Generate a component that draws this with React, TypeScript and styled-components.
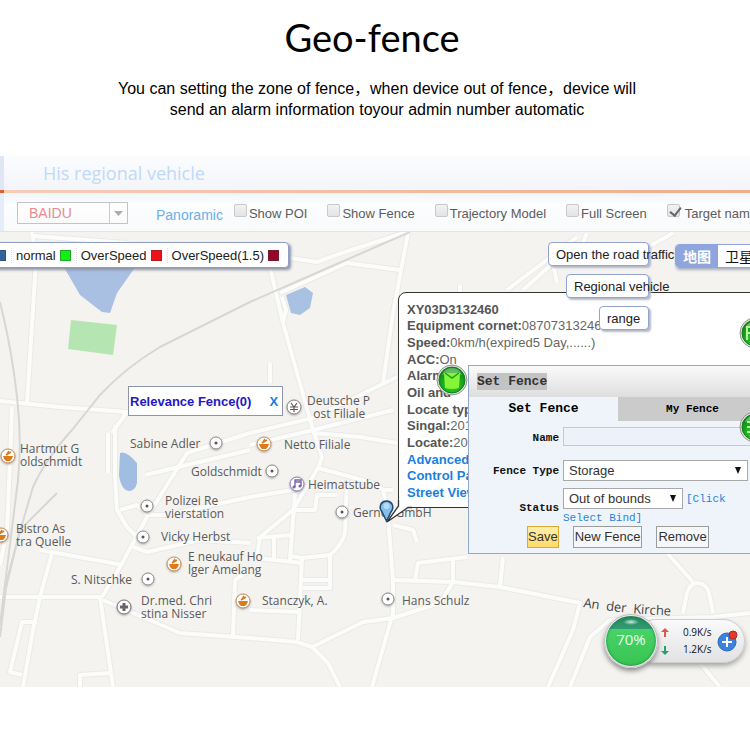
import React from "react";
import styled, { createGlobalStyle } from "styled-components";

const sans = '"Liberation Sans", Arial, sans-serif';
const mapFont = '"Open Sans", "Noto Sans", sans-serif';
const mono = '"Liberation Mono", monospace';

const GlobalStyle = createGlobalStyle`
  * { box-sizing: border-box; }
  body { margin: 0; background: #fff; font-family: ${sans}; font-size: 13px; color: #222; overflow-x: hidden; }
  button, input, select { font: inherit; color: inherit; margin: 0; }
  a { text-decoration: none; }
`;

const Page = styled.main`
  display: flex;
  flex-direction: column;
  padding-bottom: 47px;
`;

const Intro = styled.header`
  height: 156px;
  padding-top: 10px;
  text-align: center;
  color: #000;
`;

const Title = styled.h1`
  margin: 0;
  padding-right: 6px;
  font: 400 38px/54px Lato, sans-serif;
`;

const Lead = styled.p`
  margin: 14px 0 0;
  padding-left: 4px;
  font: 16px/21px "Liberation Sans", "Noto Sans CJK SC", sans-serif;
`;

const AppFrame = styled.section`
  overflow: hidden;
`;

const AppHeader = styled.div`
  display: flex;
  align-items: center;
  height: 34px;
  padding-left: 43px;
  background: linear-gradient(90deg, #dfe6f5 4px, transparent 4px),
    linear-gradient(180deg, #fbfcfe, #f3f5fa);
`;

const AppName = styled.h2`
  margin: 0;
  color: #bfdaf8;
  font: 400 18px/24px ${mapFont};
`;

const Rule = styled.div`
  height: 3px;
  background: linear-gradient(90deg, #dd5f2a 4px, #f6cdb9 4px, #efad8c);
`;

const Toolbar = styled.div`
  display: flex;
  align-items: center;
  gap: 20px;
  height: 39px;
  padding: 2px 0 0 17px;
  white-space: nowrap;
  border-bottom: 1px solid #dde4ea;
  background: linear-gradient(90deg, #e6edfa 4px, transparent 4px),
    linear-gradient(180deg, #f1f6fa, #fbfdfe 30%, #f8fafc);
`;

const SelectWrap = styled.span<{ $w: string }>`
  position: relative;
  display: inline-flex;
  flex: none;
  width: ${(p) => p.$w};
`;

const ProviderSelect = styled.select`
  appearance: none;
  width: 100%;
  height: 22px;
  padding: 0 11px;
  border: 1px solid #c4c4c4;
  border-radius: 0;
  background: linear-gradient(#fff, #fafafa);
  color: #e98c8c;
  font-size: 14px;
  line-height: 20px;
`;

const ProviderArrow = styled.svg`
  position: absolute;
  right: 1px;
  top: 1px;
  pointer-events: none;
`;

const PanoramicLink = styled.a`
  margin: 3px -9px 0 8px;
  color: #6cb0ec;
  font-size: 14px;
  line-height: 18px;
`;

const Check = styled.label`
  display: flex;
  align-items: flex-start;
  gap: 2px;
  padding-top: 2px;
  color: #5c5c5c;
  line-height: 20px;

  input {
    appearance: none;
    position: relative;
    flex: none;
    width: 13px;
    height: 13px;
    border: 1px solid #c9c9c9;
    border-radius: 2px;
    background: linear-gradient(#f2f2f2, #e4e4e4);
  }
  input:checked {
    margin-right: 3px;
  }
  input:checked::after {
    content: "";
    position: absolute;
    left: 4px;
    top: 0;
    width: 5px;
    height: 9px;
    border: solid #666;
    border-width: 0 2px 2px 0;
    transform: rotate(38deg);
  }
`;

const MapCanvas = styled.div`
  position: relative;
  min-height: 455px;
  overflow: hidden;
  background: #f4f3f0;
`;

const MapArt = styled.svg`
  position: absolute;
  inset: 0;
  width: 100%;
  height: 100%;
`;

const Legend = styled.ul`
  position: absolute;
  left: -13px;
  top: 10px;
  display: flex;
  align-items: center;
  height: 26px;
  margin: 0;
  padding: 0 9px 0 2px;
  list-style: none;
  border: 1px solid #8e9fc6;
  border-radius: 4px;
  background: #fff;
  box-shadow: 2px 2px 3px #8c93a5;
  color: #222;
`;

const LegendItem = styled.li`
  display: flex;
  align-items: center;
  gap: 4px;
  padding: 0 5px 0 4px;
  border-left: 1px dotted #ddd;
  &:first-child { padding-left: 0; }
  &:last-child { padding-right: 0; }
`;

const Swatch = styled.i<{ $c: string }>`
  width: 11px;
  height: 11px;
  border: 1px solid rgba(60, 60, 60, 0.4);
  background: ${(p) => p.$c};
`;

const Place = styled.div<{ $x: number; $y: number }>`
  position: absolute;
  left: ${(p) => p.$x}px;
  top: ${(p) => p.$y}px;
  color: #5a5a5a;
  font: 12px/13px ${mapFont};
  white-space: pre;
`;

const FenceTag = styled.div`
  position: absolute;
  left: 128px;
  top: 154px;
  display: flex;
  align-items: center;
  gap: 18px;
  height: 30px;
  padding: 0 4px 0 1px;
  border: 1px solid #8b96ac;
  background: #fff;
  color: #2418c4;
  font-weight: 700;
`;

const CloseButton = styled.button`
  padding: 0;
  border: 0;
  background: none;
  color: #1580e0;
  font-weight: 700;
`;

const Popup = styled.section`
  position: absolute;
  left: 398px;
  right: -60px;
  top: 60px;
  height: 216px;
  padding: 8px 8px 0;
  border: 1px solid #333;
  border-radius: 8px 8px 8px 0;
  background: #fff;
`;

const PopupTail = styled.svg`
  position: absolute;
  left: -23px;
  bottom: -18px;
`;

const PopupRows = styled.div`
  display: grid;
  grid-auto-rows: 1fr;
  height: 200px;
  align-items: center;
  color: #666;
  white-space: nowrap;
  b { color: #555; }
  a { color: #1b80dd; font-weight: 700; }
`;

const RoundButton = styled.button<{ $x: number; $y: number }>`
  position: absolute;
  left: ${(p) => p.$x}px;
  top: ${(p) => p.$y}px;
  width: 34px;
  height: 34px;
  padding: 0;
  border: 0;
  background: none;
  svg { display: block; }
`;

const SideButtons = styled.div`
  position: absolute;
  left: 548px;
  top: 10px;
  display: flex;
  flex-direction: column;
  align-items: flex-end;
  gap: 8px;
  width: 101px;
`;

const SideButton = styled.button<{ $w: number }>`
  width: ${(p) => p.$w}px;
  height: 24px;
  padding: 0 0 0 7px;
  border: 1px solid #92a3cf;
  border-radius: 4px;
  background: #fff;
  box-shadow: 2px 2px 2px #b5bacb;
  text-align: left;
  white-space: nowrap;
  overflow: visible;
  color: #222;
`;

const MapTypes = styled.div`
  position: absolute;
  left: 675px;
  top: 12px;
  display: flex;
  width: max-content;
  height: 24px;
  border: 1px solid #8ea5de;
  border-radius: 4px;
  overflow: hidden;
  box-shadow: 1px 2px 3px #a9aec0;
`;

const MapType = styled.button<{ $on?: boolean }>`
  flex: none;
  padding: 0 7px;
  border: 0;
  background: ${(p) => (p.$on ? "#8ea5de" : "#fff")};
  color: ${(p) => (p.$on ? "#fff" : "#111")};
  font: ${(p) => (p.$on ? 700 : 400)} 14px/20px "Noto Sans CJK SC", sans-serif;
  white-space: nowrap;
`;

const Dialog = styled.form`
  position: absolute;
  left: 468px;
  right: -40px;
  top: 133px;
  min-width: 322px;
  height: 189px;
  border: 1px solid #93a8cd;
  background: #eff4fb;
  font: 11px/14px ${mono};
  color: #111;
`;

const DialogBar = styled.div`
  display: flex;
  align-items: center;
  height: 31px;
  padding-left: 8px;
  background: linear-gradient(#fafafa, #dedede);
  h3 {
    margin: 0;
    background: #c3c3c3;
    color: #333;
    font: 700 13px/17px ${mono};
  }
`;

const TabList = styled.div`
  display: grid;
  grid-template-columns: 149px 1fr;
  height: 24px;
`;

const Tab = styled.button<{ $on?: boolean }>`
  padding: 0 ${(p) => (p.$on ? 0 : 22)}px 0 0;
  border: 0;
  background: ${(p) => (p.$on ? "transparent" : "#cbcbcb")};
  font: 700 ${(p) => (p.$on ? 13 : 11)}px/22px ${mono};
  color: #000;
`;

const Fields = styled.div`
  display: grid;
  grid-template-columns: 90px 1fr;
  column-gap: 4px;
  padding-top: 6px;
`;

const FieldLabel = styled.label`
  padding-top: 4px;
  text-align: right;
  font-weight: 700;
`;

const StatusLabel = styled(FieldLabel)`
  padding-top: 13px;
`;

const FieldCell = styled.div<{ $h: number }>`
  height: ${(p) => p.$h}px;
`;

const NameInput = styled.input`
  width: 100%;
  height: 19px;
  padding: 0 4px;
  border: 1px solid #c3cad4;
  background: #edf2fa;
  font: 13px/17px ${sans};
`;

const FieldSelect = styled.select`
  appearance: none;
  width: 100%;
  height: 21px;
  padding: 0 5px;
  border: 1px solid #a9a9a9;
  border-radius: 0;
  background: #fff;
  color: #333;
  font: 13px/19px ${sans};
`;

const SelectArrow = styled.svg`
  position: absolute;
  right: 6px;
  top: 6px;
  pointer-events: none;
`;

const StatusLine = styled.div`
  display: flex;
  flex-wrap: wrap;
  align-items: center;
  column-gap: 3px;
`;

const BindLink = styled.a`
  color: #1f86d8;
  line-height: 18px;
`;

const Actions = styled.div`
  display: flex;
  gap: 14px;
  padding-left: 58px;
`;

const ActionButton = styled.button<{ $main?: boolean }>`
  height: 22px;
  padding: 0 ${(p) => (p.$main ? 0 : 1)}px;
  border: 1px solid ${(p) => (p.$main ? "#e0a92c" : "#9c9c9c")};
  background: ${(p) => (p.$main ? "linear-gradient(#fff0b0, #ffd968)" : "#f6f7f9")};
  color: #333;
  font: 13px/20px ${sans};
`;

const Monitor = styled.div`
  position: absolute;
  left: 604px;
  top: 382px;
  display: flex;
  align-items: center;
  height: 54px;
`;

const Gauge = styled.div`
  z-index: 1;
  display: grid;
  place-items: center;
  width: 54px;
  height: 54px;
  padding-bottom: 4px;
  border: 2px solid #eceeed;
  border-radius: 50%;
  outline: 1px solid #bdbdbd;
  outline-offset: -1px;
  background: radial-gradient(ellipse 8px 3px at 50% 12%, #c9ede0, transparent),
    linear-gradient(#25865f 0, #329c72 26%, #48d268 27%, #38c452);
  box-shadow: inset 0 0 3px #147a3f, 0 3px 5px #8b8b8b;
  color: #e6ffe6;
  font: 15px/20px ${mapFont};
`;

const Rates = styled.div`
  display: flex;
  align-items: center;
  gap: 5px;
  height: 44px;
  margin-left: -24px;
  padding: 0 5px 0 26px;
  border: 1px solid #cfcfcf;
  border-radius: 22px;
  background: linear-gradient(#fafafa, #e2e2e4);
  box-shadow: 0 3px 5px #a5a5a5;
`;

const RateGrid = styled.div`
  display: grid;
  grid-template-columns: 22px auto;
  align-items: center;
  color: #111;
  font: 10px/17px ${mapFont};
`;

function Roads() {
  const roads = [
    "M32 232L36 262L27 403", "M33 236L127 243", "M0 401L60 407L127 412L112 433",
    "M12 407L10 460L7 530L0 565", "M115 425V475L117 510L127 527L137 537", "M108 433V473",
    "M270 267L283 323L313 430L322 457L318 468L293 510L260 537L257 557",
    "M290 258L317 262L345 252L407 232", "M280 293L347 263L400 270", "M282 297L286 310L283 322",
    "M408 233L393 313L383 383", "M250 433L313 418L397 377", "M250 445L313 430L393 410",
    "M313 433L360 437L397 443", "M270 363V383",
    "M250 450L145 475", "M250 433L187 453L147 517L120 567L102 597",
    "M293 490L250 497L167 515H147L137 505L120 510", "M133 547L147 552L200 540L250 543", "M40 550L123 565",
    "M52 553L40 597L33 630L23 687", "M0 597H100L113 687", "M103 600L180 633L250 638L297 642L312 647L328 663L340 687",
    "M37 622H22L10 672L22 675", "M80 687V675L110 673", "M233 635L235 580L250 570",
    "M383 490H393", "M295 493L290 560", "M318 468L370 482L383 490L386 505",
    "M293 510H315L317 495H337", "M347 480L345 533Q342 545 330 555L302 558L290 556",
    "M388 518L393 580V613L372 687", "M393 525L413 530L417 542", "M302 558L298 640",
    "M330 555V588H303M303 580H330", "M250 610L298 612", "M257 538L292 535M257 558L302 563M274 537V560",
    "M312 647L363 622L393 618L440 603L453 582", "M393 580L453 582L500 587L580 603L573 630L548 687",
    "M415 580L418 563L467 557M453 558V580", "M503 557L500 587",
    "M570 687L590 637L610 620L713 617L750 613", "M667 553L693 582",
    "M683 613L687 593Q690 583 698 583Q707 584 709 593L713 613", "M700 663L720 687",
    "M507 290L577 237M523 290L553 263L557 283M587 233L577 257", "M643 250L673 233", "M460 292V285",
  ];
  const rails = [
    "M0 302Q12 350 17 397Q22 440 18 480L8 560L0 625",
    "M410 232L323 270L250 302L160 347Q125 368 100 395L72 430Q45 460 33 487Q20 530 7 580L0 637",
    "M57 493L20 530L3 600",
  ];
  return (
    <MapArt viewBox="0 232 750 455" preserveAspectRatio="xMinYMin slice" fill="none" aria-hidden="true">
      {roads.map((d) => <path key={d} d={d} stroke="#eaeae8" strokeWidth="6" strokeLinejoin="round" />)}
      {roads.map((d) => <path key={d} d={d} stroke="#fcfcfb" strokeWidth="4" strokeLinejoin="round" />)}
      {rails.map((d) => <path key={d} d={d} stroke="#d8d7d4" strokeWidth="2" />)}
      <path d="M61 262L80 295L102 312L110 313L117 293L136 266Z" fill="#a9c0e3" />
      <path d="M71 320L117 325L113 355L68 349Z" fill="#b5e6b2" />
      <path d="M286 295L305 287L313 293L310 308L300 315L291 313Z" fill="#a9c2e3" />
      <path d="M120 453Q126 450 137 463V483Q135 491 129 491Q121 490 119 475Z" fill="#a2bde2" />
      <path id="street" d="M583 607Q630 615 690 616" />
      <text fill="#444" fontFamily="Open Sans, Noto Sans, sans-serif" fontSize="13">
        <textPath href="#street">{"An \u00a0der \u00a0Kirche"}</textPath>
      </text>
    </MapArt>
  );
}

type Kind = "dot" | "food" | "yen" | "music" | "cross";

const PinSvg = styled.svg<{ $x: number; $y: number }>`
  position: absolute;
  left: ${(p) => p.$x - 9}px;
  top: ${(p) => p.$y - 9}px;
  filter: drop-shadow(0 1px 1px #aaa);
`;

function Pin({ kind, x, y }: { kind: Kind; x: number; y: number }) {
  const ring = { dot: "#8d8d8d", food: "#c58a52", yen: "#8d7f80", music: "#8b7bb5", cross: "#777" }[kind];
  return (
    <PinSvg $x={x} $y={y} width="18" height="18" viewBox="-9 -9 18 18" fill="none" aria-hidden="true">
      <circle r={kind === "dot" ? 6 : 7} fill="#fff" stroke={ring} />
      {kind === "dot" && <circle r="1.5" fill="#555" />}
      {kind === "food" && (
        <>
          <path d="M-5 0H5Q4 4 2 5H-2Q-4 4 -5 0Z" fill="#dd7a1c" />
          <path d="M-2 -1L3 -4M-1 -2L1 -5" stroke="#dd7a1c" strokeWidth="1.5" />
        </>
      )}
      {kind === "yen" && <path d="M-3 -4L0 0L3 -4M0 0V5M-4 0H4M-4 2.5H4" stroke="#6d5558" strokeWidth="1.2" />}
      {kind === "music" && (
        <>
          <path d="M-2 3V-4H4V2M-2 -2H4" stroke="#7a67ad" strokeWidth="1.4" />
          <circle cx="-3" cy="3" r="1.6" fill="#7a67ad" />
          <circle cx="3" cy="2" r="1.6" fill="#7a67ad" />
        </>
      )}
      {kind === "cross" && <path d="M0 -4V4M-4 0H4" stroke="#666" strokeWidth="3" />}
    </PinSvg>
  );
}

const places: { text: string; x: number; y: number; kind: Kind; px: number; py: number }[] = [
  { text: "Hartmut G\noldschmidt", x: 20, y: 210, kind: "food", px: 8, py: 224 },
  { text: "Bistro As\ntra Quelle", x: 16, y: 290, kind: "food", px: 1, py: 303 },
  { text: "Sabine Adler", x: 130, y: 205, kind: "dot", px: 216, py: 211 },
  { text: "Goldschmidt", x: 191, y: 233, kind: "dot", px: 272, py: 239 },
  { text: "Polizei Re\nvierstation", x: 165, y: 262, kind: "dot", px: 147, py: 274 },
  { text: "Vicky Herbst", x: 161, y: 298, kind: "dot", px: 143, py: 305 },
  { text: "E neukauf Ho\nlger Amelang", x: 188, y: 318, kind: "food", px: 174, py: 332 },
  { text: "S. Nitschke", x: 71, y: 341, kind: "dot", px: 148, py: 347 },
  { text: "Dr.med. Chri\nstina Nisser", x: 141, y: 362, kind: "cross", px: 124, py: 375 },
  { text: "Deutsche P\n  ost Filiale", x: 307, y: 162, kind: "yen", px: 294, py: 175 },
  { text: "Netto Filiale", x: 284, y: 206, kind: "food", px: 264, py: 212 },
  { text: "Heimatstube", x: 308, y: 246, kind: "music", px: 297, py: 252 },
  { text: "Gerner GmbH", x: 353, y: 274, kind: "dot", px: 342, py: 280 },
  { text: "Stanczyk, A.", x: 262, y: 362, kind: "food", px: 243, py: 369 },
  { text: "Hans Schulz", x: 402, y: 362, kind: "dot", px: 388, py: 367 },
];

function GreenBadge({ id, children }: { id: string; children: React.ReactNode }) {
  return (
    <svg width="34" height="34" viewBox="0 0 34 34" fill="none" aria-hidden="true">
      <defs>
        <radialGradient id={id} cx="50%" cy="70%" r="60%">
          <stop offset="0" stopColor="#35d52d" />
          <stop offset="1" stopColor="#099011" />
        </radialGradient>
      </defs>
      <circle cx="17" cy="17" r="15" fill="#e3e5e0" stroke="#8e938c" />
      <circle cx="17" cy="17" r="13" fill={`url(#${id})`} stroke="#17761b" />
      <path d="M7 12Q10 5 17 5Q24 5 27 12Q17 8 7 12Z" fill="#fff" opacity=".35" />
      {children}
    </svg>
  );
}

function DownArrow() {
  return (
    <SelectArrow width="8" height="8" viewBox="0 0 8 8" aria-hidden="true">
      <path d="M1 1H7L4 8Z" fill="#111" />
    </SelectArrow>
  );
}

const checks = ["Show POI", "Show Fence", "Trajectory Model", "Full Screen", "Target name"];
const legend = [["", "#30629c"], ["normal", "#10f015"], ["OverSpeed", "#f01218"], ["OverSpeed(1.5)", "#9a0629"]];
const details = [
  ["XY03D3132460", ""], ["Equipment cornet:", "087073132460"], ["Speed:", "0km/h(expired5 Day,......)"],
  ["ACC:", "On"], ["Alarm:", ""], ["Oil and", ""], ["Locate type:", ""], ["Singal:", "2015"], ["Locate:", "2015"],
];

export default function App() {
  return (
    <Page>
      <GlobalStyle />
      <Intro>
        <Title>Geo-fence</Title>
        <Lead>
          You can setting the zone of fence，when device out of fence，device will
          <br />
          send an alarm information toyour admin number automatic
        </Lead>
      </Intro>
      <AppFrame>
        <AppHeader>
          <AppName>His regional vehicle</AppName>
        </AppHeader>
        <Rule />
        <Toolbar>
          <SelectWrap $w="111px">
            <ProviderSelect aria-label="Map provider">
              <option>BAIDU</option>
            </ProviderSelect>
            <ProviderArrow width="18" height="20" viewBox="0 0 18 20" aria-hidden="true">
              <path d="M.5 0V20" stroke="#ccc" />
              <path d="M5 8H14L9.500 13Z" fill="#aaa" />
            </ProviderArrow>
          </SelectWrap>
          <PanoramicLink href="#panoramic">Panoramic</PanoramicLink>
          {checks.map((c) => (
            <Check key={c}>
              <input type="checkbox" defaultChecked={c === "Target name"} />
              {c}
            </Check>
          ))}
        </Toolbar>
        <MapCanvas>
          <Roads />
          {places.map((p) => (
            <React.Fragment key={p.text}>
              <Pin kind={p.kind} x={p.px} y={p.py} />
              <Place $x={p.x} $y={p.y}>{p.text}</Place>
            </React.Fragment>
          ))}
          <Legend>
            {legend.map(([name, color]) => (
              <LegendItem key={color}>
                <span>{name}</span>
                <Swatch $c={color} />
              </LegendItem>
            ))}
          </Legend>
          <FenceTag>
            Relevance Fence(0)
            <CloseButton type="button" aria-label="Close">X</CloseButton>
          </FenceTag>
          <Popup>
            <PopupTail width="36" height="38" viewBox="0 0 36 38" aria-hidden="true">
              <path d="M22.500 14V19L10 35L33 20.500H36V14Z" fill="#fff" />
              <path d="M22.500 13V19L11 35L32 20.500H36" fill="none" stroke="#333" strokeWidth="1.300" />
              <path d="M10.500 34L6 25Q3 21 5 17Q7 14 10.500 14Q14 14 16 17Q18 21 15 25Z" fill="#86bfec" stroke="#23496e" strokeWidth="1.500" />
              <circle cx="10.500" cy="19" r="3" fill="#b8dcf8" />
            </PopupTail>
            <PopupRows>
              {details.map(([name, value]) => (
                <div key={name}><b>{name}</b>{value}</div>
              ))}
              <a href="#advanced">Advanced</a>
              <a href="#control">Control Panel</a>
              <a href="#street">Street View</a>
            </PopupRows>
          </Popup>
          <MapTypes>
            <MapType type="button" $on>地图</MapType>
            <MapType type="button">卫星</MapType>
          </MapTypes>
          <SideButtons>
            <SideButton type="button" $w={101}>Open the road traffic</SideButton>
            <SideButton type="button" $w={83}>Regional vehicle</SideButton>
            <SideButton type="button" $w={50}>range</SideButton>
          </SideButtons>
          <RoundButton type="button" aria-label="Mail" $x={435} $y={131}>
            <GreenBadge id="mail">
              <path d="M9 10H25L24 25Q17 27 10 25Z" fill="#85f536" />
              <path d="M10 10L17 15L24 10" stroke="#239c1e" strokeWidth="1.500" />
            </GreenBadge>
          </RoundButton>
          <RoundButton type="button" aria-label="Flag" $x={738} $y={84}>
            <GreenBadge id="flag">
              <path d="M9 24V11H16M9 17H15" stroke="#b8f5a5" strokeWidth="2" />
            </GreenBadge>
          </RoundButton>
          <Dialog>
            <DialogBar><h3>Set Fence</h3></DialogBar>
            <TabList role="tablist">
              <Tab type="button" role="tab" aria-selected="true" $on>Set Fence</Tab>
              <Tab type="button" role="tab" aria-selected="false">My Fence</Tab>
            </TabList>
            <Fields>
              <FieldLabel htmlFor="fence-name">Name</FieldLabel>
              <FieldCell $h={33}><NameInput id="fence-name" /></FieldCell>
              <FieldLabel htmlFor="fence-type">Fence Type</FieldLabel>
              <FieldCell $h={28}>
                <SelectWrap $w="185px">
                  <FieldSelect id="fence-type"><option>Storage</option></FieldSelect>
                  <DownArrow />
                </SelectWrap>
              </FieldCell>
              <StatusLabel htmlFor="fence-status">Status</StatusLabel>
              <FieldCell $h={38}>
                <StatusLine>
                  <SelectWrap $w="120px">
                    <FieldSelect id="fence-status"><option>Out of bounds</option></FieldSelect>
                    <DownArrow />
                  </SelectWrap>
                  <BindLink href="#bind">[Click</BindLink>
                </StatusLine>
                <BindLink href="#bind">Select Bind]</BindLink>
              </FieldCell>
            </Fields>
            <Actions>
              <ActionButton type="button" $main>Save</ActionButton>
              <ActionButton type="button">New Fence</ActionButton>
              <ActionButton type="button">Remove</ActionButton>
            </Actions>
          </Dialog>
          <RoundButton type="button" aria-label="List" $x={738} $y={178}>
            <GreenBadge id="list">
              <path d="M9 12H20M9 17H20M9 22H20" stroke="#b8f5a5" strokeWidth="2" />
            </GreenBadge>
          </RoundButton>
          <Monitor>
            <Gauge>70%</Gauge>
            <Rates>
              <RateGrid>
                <svg width="8" height="10" viewBox="0 0 8 10" aria-hidden="true">
                  <path d="M4 0L8 4H5V9H3V4H0Z" fill="#e0564c" />
                </svg>
                <span>0.9K/s</span>
                <svg width="8" height="10" viewBox="0 0 8 10" aria-hidden="true">
                  <path d="M4 10L8 6H5V1H3V6H0Z" fill="#2a9d68" />
                </svg>
                <span>1.2K/s</span>
              </RateGrid>
              <svg width="22" height="24" viewBox="0 0 22 24" aria-hidden="true">
                <circle cx="10" cy="13" r="9" fill="#3b82dc" stroke="#2a69bb" />
                <path d="M10 8V18M5 13H15" stroke="#fff" strokeWidth="2" />
                <circle cx="16" cy="6" r="4" fill="#e23a28" stroke="#b32619" />
              </svg>
            </Rates>
          </Monitor>
        </MapCanvas>
      </AppFrame>
    </Page>
  );
}
